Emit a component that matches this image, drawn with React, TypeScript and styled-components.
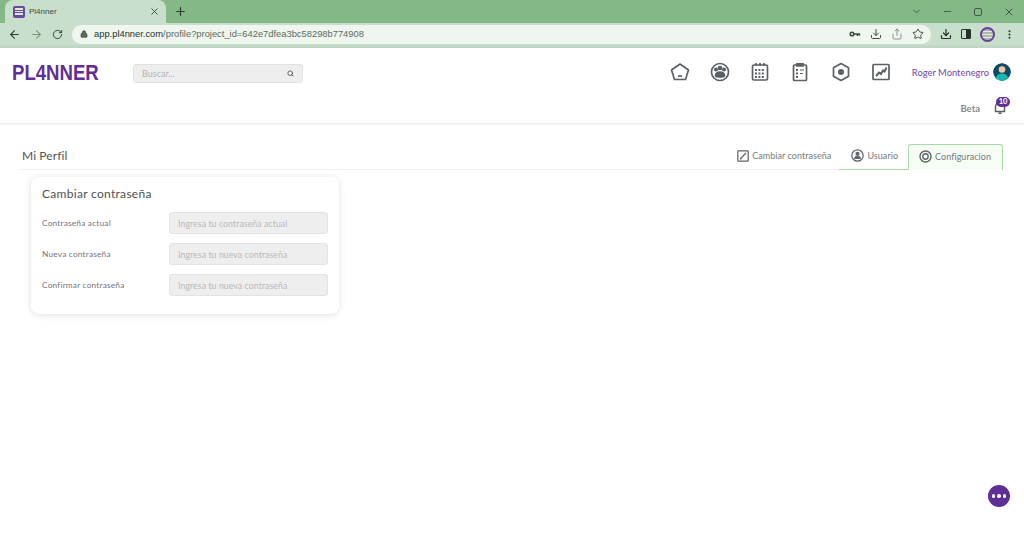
import styled, { createGlobalStyle } from 'styled-components';
import { ArrowLeft, ArrowRight, RotateCw, Lock, Plus, X, Minus, ChevronDown, Star, Download, Share, Search, MoreVertical } from 'lucide-react';

const GlobalStyle = createGlobalStyle`
  html, body { margin: 0; padding: 0; background: #fff; }
  body { font-family: Lato, "Noto Sans", sans-serif; color: #555; width: 1024px; height: 542px; overflow: hidden; }
  * { box-sizing: border-box; }
`;

const Page = styled.div`
  display: flex;
  flex-direction: column;
  height: 542px;
  position: relative;
`;

const TabStrip = styled.div`
  height: 23px;
  background: #84b887;
  display: flex;
  align-items: flex-end;
  padding-left: 5px;
  color: #2b3b2d;
`;

const Tab = styled.div`
  width: 161px;
  height: 23px;
  background: #c8e0cb;
  border-radius: 8px 8px 0 0;
  display: flex;
  align-items: center;
  padding: 0 6px 0 8px;
  gap: 4px;
  font-family: "Liberation Sans", sans-serif;
  font-size: 8px;
  color: #3d4a3f;
`;

const TabName = styled.span`
  flex: 1;
`;

const Favicon = styled.span`
  width: 12px;
  height: 12px;
  border-radius: 2px;
  background: #6a4a9c;
  display: flex;
  flex-direction: column;
  justify-content: center;
  gap: 1px;
  padding: 0 2px;
  & > i { display: block; height: 1.5px; background: #dfe6d8; }
`;

const NewTab = styled.span`
  margin-left: 8px;
  height: 23px;
  display: flex;
  align-items: center;
`;

const WindowButtons = styled.div`
  margin-left: auto;
  display: flex;
  align-items: center;
  height: 23px;
  gap: 20px;
  padding-right: 9px;
  color: #3f5a42;
`;

const RestoreIcon = styled.span`
  width: 8px;
  height: 8px;
  border: 1.2px solid #3f5a42;
  border-radius: 2px;
  margin: 0 1px;
`;

const Toolbar = styled.div`
  height: 22px;
  background: #c8e0cb;
  display: flex;
  align-items: center;
  padding-left: 8px;
  padding-right: 9px;
  color: #2f3d31;
`;

const NavGroup = styled.div`
  display: flex;
  align-items: center;
  gap: 9px;
  width: 64px;
`;

const Omnibox = styled.div`
  width: 859px;
  height: 19px;
  background: #eff6ef;
  border-radius: 10px;
  display: flex;
  align-items: center;
  padding: 0 7px 0 8px;
  font-family: "Liberation Sans", sans-serif;
  font-size: 9.35px;
  gap: 6px;
  color: #5c6b5e;
`;

const Url = styled.span`
  flex: 1;
  & > b { font-weight: 400; color: #26332a; }
`;

const OmniIcons = styled.div`
  display: flex;
  gap: 9px;
  align-items: center;
  color: #3f4d41;
`;

const ToolIcons = styled.div`
  display: flex;
  align-items: center;
  gap: 9px;
  margin-left: 9px;
  color: #26332a;
`;

const PanelIcon = styled.span`
  width: 10px;
  height: 10px;
  border: 1.5px solid #26332a;
  border-radius: 1px;
  background: linear-gradient(90deg, #c8e0cb 50%, #26332a 50%);
`;

const ProfileDot = styled.span`
  width: 15px;
  height: 15px;
  border-radius: 50%;
  background: repeating-linear-gradient(180deg, #a9b8a8 0 2px, #e6e9e2 2px 3px);
  border: 2px solid #6a3f9e;
`;

const ToolbarEdge = styled.div`
  height: 3px;
  background: #c1d9c4;
`;

const Header = styled.header`
  height: 75px;
  background: #fff;
  box-shadow: 0 1px 3px rgba(0, 0, 0, 0.1);
  display: flex;
  flex-direction: column;
  padding: 15px 13px 0 12px;
`;

const HeaderTop = styled.div`
  display: flex;
  align-items: center;
  height: 20px;
`;

const Logo = styled.div`
  width: 121px;
  font-family: "Liberation Sans", sans-serif;
  font-weight: 700;
  font-size: 18.6px;
  color: #5f2e97;
  transform: scaleY(1.2);
  transform-origin: left center;
`;

const SearchBox = styled.div`
  width: 170px;
  height: 19px;
  background: #eeeeee;
  border: 1px solid #e2e2e2;
  border-radius: 3px;
  display: flex;
  align-items: center;
  justify-content: space-between;
  padding: 0 8px;
  font-size: 9px;
  color: #b5b5b5;
  & > svg { color: #555; }
`;

const NavIcons = styled.nav`
  margin-left: auto;
  margin-bottom: 2px;
  display: flex;
  gap: 20.2px;
  color: #5b6064;
`;

const NavIcon = styled.svg`
  width: 20px;
  height: 20px;
  fill: none;
  stroke: currentColor;
  stroke-width: 1.7;
  display: block;
`;

const UserName = styled.span`
  margin-left: 21px;
  margin-bottom: 2px;
  font-size: 9.4px;
  font-weight: 400;
  color: #7148a8;
`;

const Avatar = styled.svg`
  width: 18px;
  height: 18px;
  margin-left: 4px;
  margin-bottom: 2px;
  border-radius: 50%;
  display: block;
`;

const HeaderBottom = styled.div`
  display: flex;
  justify-content: flex-end;
  align-items: flex-end;
  margin-top: 7px;
  height: 24px;
  gap: 14px;
  padding-right: 5px;
`;

const BetaLabel = styled.span`
  font-size: 9.5px;
  line-height: 12px;
  color: #8a8a8a;
  font-weight: 700;
  margin-bottom: -1px;
`;

const BellWrap = styled.span`
  position: relative;
  display: block;
  width: 12px;
  height: 13px;
  color: #5b6064;
  & > svg { display: block; }
`;

const BellBadge = styled.span`
  position: absolute;
  top: -4px;
  left: 2px;
  width: 14px;
  height: 10px;
  border-radius: 5px;
  background: #5f2e97;
  color: #fff;
  font-size: 7.5px;
  font-weight: 700;
  line-height: 10px;
  text-align: center;
`;

const Main = styled.main`
  flex: 1;
  padding: 20px 21px 0 21px;
`;

const TitleRow = styled.div`
  display: flex;
  justify-content: space-between;
  align-items: flex-end;
  height: 27px;
  border-bottom: 1px solid #f0f0f0;
`;

const PageTitle = styled.h1`
  margin: 0 0 6px 1px;
  font-size: 12px;
  font-weight: 400;
  letter-spacing: 0.1px;
  color: #555;
`;

const Tabs = styled.div`
  display: flex;
  align-items: flex-end;
  margin-bottom: -1px;
`;

const TabItem = styled.div<{ $variant?: 'active' | 'line' }>`
  height: 26px;
  display: flex;
  align-items: center;
  gap: 3px;
  font-size: 9px;
  letter-spacing: 0.05px;
  color: #77797c;
  padding: ${p => (p.$variant === 'active' ? '0 11px 2px 10px' : p.$variant === 'line' ? '0 10px 2px 12px' : '0 8px 2px 0')};
  background: ${p => (p.$variant === 'active' ? '#f6fdf5' : 'transparent')};
  border: ${p => (p.$variant === 'active' ? '1px solid #a9dba6' : 'none')};
  border-bottom: ${p => (p.$variant === 'line' ? '1px solid #a9dba6' : p.$variant === 'active' ? 'none' : '1px solid transparent')};
  border-radius: ${p => (p.$variant === 'active' ? '3px 3px 0 0' : '0')};
  & > svg { color: #606468; }
`;

const Card = styled.section`
  width: 308px;
  height: 137px;
  margin: 7px 0 0 10px;
  background: #fff;
  border-radius: 8px;
  box-shadow: 0 1px 7px rgba(0, 0, 0, 0.13);
  padding: 9px 11px 0 11px;
`;

const CardTitle = styled.h2`
  margin: 0 0 10px;
  font-size: 12px;
  font-weight: 400;
  letter-spacing: 0.3px;
  color: #4e5054;
  line-height: 16px;
`;

const FormRow = styled.div`
  display: grid;
  grid-template-columns: 127px 159px;
  align-items: center;
  height: 22px;
  margin-bottom: 9px;
`;

const FieldLabel = styled.label`
  font-size: 8.3px;
  letter-spacing: 0.2px;
  color: #76737e;
  margin-bottom: 1px;
`;

const PasswordInput = styled.input`
  width: 159px;
  height: 22px;
  padding: 0 8px;
  background: #eeeeee;
  border: 1px solid #e3e3e3;
  border-radius: 3px;
  font-family: Lato, sans-serif;
  font-size: 8.7px;
  letter-spacing: 0.1px;
  &::placeholder { color: #b9b9b9; opacity: 1; }
`;

const ChatButton = styled.button`
  position: absolute;
  right: 14px;
  bottom: 35px;
  width: 22px;
  height: 22px;
  padding: 0;
  border: none;
  border-radius: 50%;
  background: #5f2e97;
  display: flex;
  align-items: center;
  justify-content: center;
  gap: 2px;
  & > i { width: 3.5px; height: 3.5px; border-radius: 50%; background: #fff; }
`;

const fields = [
  ['Contraseña actual', 'Ingresa tu contraseña actual'],
  ['Nueva contraseña', 'Ingresa tu nueva contraseña'],
  ['Confirmar contraseña', 'Ingresa tu nueva contraseña'],
];

export default function App() {
  return (
    <Page>
      <GlobalStyle />
      <TabStrip>
        <Tab>
          <Favicon><i /><i /><i /></Favicon>
          <TabName>Pl4nner</TabName>
          <X size={11} strokeWidth={2} />
        </Tab>
        <NewTab><Plus size={13} strokeWidth={2.2} /></NewTab>
        <WindowButtons>
          <ChevronDown size={11} />
          <Minus size={11} />
          <RestoreIcon />
          <X size={12} />
        </WindowButtons>
      </TabStrip>
      <Toolbar>
        <NavGroup>
          <ArrowLeft size={13} strokeWidth={2} />
          <ArrowRight size={13} strokeWidth={2} color="#83937f" />
          <RotateCw size={11} strokeWidth={2} />
        </NavGroup>
        <Omnibox>
          <Lock size={8} fill="currentColor" color="#3f4d41" />
          <Url><b>app.pl4nner.com</b>/profile?project_id=642e7dfea3bc58298b774908</Url>
          <OmniIcons>
            <svg width="12" height="12" viewBox="0 0 12 12" fill="none" stroke="currentColor" strokeWidth="1.6">
              <circle cx="3" cy="6" r="1.8" />
              <path d="M5 6h6M8.500 6v2M10.500 6v1.500" />
            </svg>
            <Download size={12} />
            <Share size={12} color="#87948a" />
            <Star size={12} />
          </OmniIcons>
        </Omnibox>
        <ToolIcons>
          <Download size={12} strokeWidth={2.4} />
          <PanelIcon />
          <ProfileDot />
          <MoreVertical size={11} strokeWidth={2.4} />
        </ToolIcons>
      </Toolbar>
      <ToolbarEdge />
      <Header>
        <HeaderTop>
          <Logo>PL4NNER</Logo>
          <SearchBox>
            Buscar...
            <Search size={7} strokeWidth={3} />
          </SearchBox>
          <NavIcons>
            <NavIcon viewBox="0 0 20 20">
              <path d="M10 2 18.5 8 15.5 17.5H4.5L1.5 8Z" strokeLinejoin="round" />
              <path d="M8 14h4" />
            </NavIcon>
            <NavIcon viewBox="0 0 20 20">
              <circle cx="10" cy="10" r="8.5" />
              <circle cx="6" cy="7.5" r="1.2" fill="currentColor" />
              <circle cx="10" cy="6" r="1.4" fill="currentColor" />
              <circle cx="14" cy="7.5" r="1.2" fill="currentColor" />
              <path d="M5.5 13.5c0-2 2-3.5 4.5-3.5s4.5 1.5 4.5 3.5-9 2-9 0Z" fill="currentColor" />
            </NavIcon>
            <NavIcon viewBox="0 0 20 20">
              <rect x="2.5" y="3" width="15" height="15" rx="1.5" />
              <path d="M6 1v3M10 1v3M14 1v3" />
              <path d="M5 8h10M5 11.5h10M5 15h10" strokeWidth="2" strokeDasharray="2 1.4" />
            </NavIcon>
            <NavIcon viewBox="0 0 20 20">
              <rect x="3.5" y="3" width="13" height="15.5" rx="1" />
              <path d="M7 1.8h6V4H7Z" fill="currentColor" />
              <path d="M6 8h2M6 11.5h2M6 15h2" strokeWidth="2" />
              <path d="M10 8h4M10 11.5h3" strokeWidth="1.2" />
            </NavIcon>
            <NavIcon viewBox="0 0 20 20">
              <path d="M10 1.5 17.5 5.8V14.2L10 18.5 2.5 14.2V5.8Z" strokeLinejoin="round" />
              <circle cx="10" cy="10" r="3" fill="currentColor" stroke="none" />
            </NavIcon>
            <NavIcon viewBox="0 0 20 20">
              <rect x="2" y="2.5" width="16" height="15" rx="0.8" />
              <path d="M5 14 8 10.5 10 12 12 8.5 13.5 9.5 15.5 5.5" strokeWidth="2" />
            </NavIcon>
          </NavIcons>
          <UserName>Roger Montenegro</UserName>
          <Avatar viewBox="0 0 18 18">
            <circle cx="9" cy="9" r="9" fill="#0d4a68" />
            <path d="M3 16c0-4 3-5.500 6-5.500s6 1.500 6 5.500L9 19Z" fill="#1bb5ad" />
            <circle cx="9" cy="6.500" r="3.300" fill="#f2c6a0" />
          </Avatar>
        </HeaderTop>
        <HeaderBottom>
          <BetaLabel>Beta</BetaLabel>
          <BellWrap>
            <svg width="12" height="13" viewBox="0 0 12 13" fill="none" stroke="currentColor" strokeWidth="1.5">
              <path d="M1.500 10.500V6a4.500 4.500 0 0 1 9 0v4.500ZM4.500 12.300h3" />
            </svg>
            <BellBadge>10</BellBadge>
          </BellWrap>
        </HeaderBottom>
      </Header>
      <Main>
        <TitleRow>
          <PageTitle>Mi Perfil</PageTitle>
          <Tabs>
            <TabItem>
              <svg width="12" height="12" viewBox="0 0 12 12" fill="none" stroke="currentColor" strokeWidth="1.2">
                <rect x="0.800" y="0.800" width="10.400" height="10.400" rx="0.500" />
                <path d="M3 9 9 3M3 9h1.500" />
              </svg>
              Cambiar contraseña
            </TabItem>
            <TabItem $variant="line">
              <svg width="13" height="13" viewBox="0 0 13 13" fill="none" stroke="currentColor" strokeWidth="1.200">
                <circle cx="6.500" cy="6.500" r="5.700" />
                <circle cx="6.500" cy="4.800" r="1.500" fill="currentColor" />
                <path d="M3.800 9.500c0-3 5.400-3 5.400 0Z" fill="currentColor" />
              </svg>
              Usuario
            </TabItem>
            <TabItem $variant="active">
              <svg width="13" height="13" viewBox="0 0 13 13" fill="none" stroke="currentColor" strokeWidth="1.400">
                <circle cx="6.500" cy="6.500" r="5.500" />
                <circle cx="6.500" cy="6.500" r="2.700" />
              </svg>
              Configuracion
            </TabItem>
          </Tabs>
        </TitleRow>
        <Card>
          <CardTitle>Cambiar contraseña</CardTitle>
          {fields.map(([label, placeholder]) => (
            <FormRow key={label}>
              <FieldLabel>{label}</FieldLabel>
              <PasswordInput placeholder={placeholder} />
            </FormRow>
          ))}
        </Card>
      </Main>
      <ChatButton aria-label="Más"><i /><i /><i /></ChatButton>
    </Page>
  );
}
